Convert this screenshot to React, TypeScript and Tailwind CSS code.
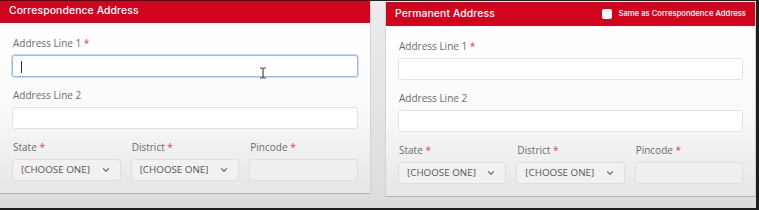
import { ChevronDown } from 'lucide-react';

const labelCls = 'h-[14px] pl-[1px] text-[10px] leading-[14px] text-[#6b6b6b]';

function Label({ text, required }: { text: string; required?: boolean }) {
  return (
    <div className={labelCls} style={{ fontFamily: '"Open Sans", sans-serif' }}>
      {text}
      {required && <span className="text-[#d6454f]"> *</span>}
    </div>
  );
}

function SelectBox() {
  return (
    <div className="flex h-[22px] items-center justify-between rounded-[3px] border border-[#dedede] bg-[#f1f1f1] pl-[8px] pr-[9px]">
      <span className="text-[9.8px] text-[#555]" style={{ fontFamily: '"Open Sans", sans-serif' }}>
        [CHOOSE ONE]
      </span>
      <ChevronDown size={10} strokeWidth={3} className="text-[#777]" />
    </div>
  );
}

function AddressPanel({
  title,
  focused,
  sameAs,
  className,
}: {
  title: string;
  focused?: boolean;
  sameAs?: boolean;
  className: string;
}) {
  return (
    <div className={`flex w-[371px] flex-col border border-t-0 border-[#d6d0d1] border-b-[#c7adb3] ${className}`}>
      <div className="flex h-[24px] items-center justify-between bg-[#d0041f] pl-[9px] pr-[9px]">
        <span className="text-[10.4px] font-medium tracking-[0.1px] text-white" style={{ fontFamily: 'Inter, sans-serif' }}>
          {title}
        </span>
        {sameAs && (
          <label className="flex items-center gap-[6px]">
            <span className="h-[10px] w-[10px] rounded-[2px] bg-white" />
            <span className="text-[7.7px] font-medium text-white" style={{ fontFamily: 'Inter, sans-serif' }}>
              Same as Correspondence Address
            </span>
          </label>
        )}
      </div>
      <div className="flex flex-col bg-gradient-to-b from-white via-[#fafafa] to-[#e6e6e6] px-[12px] pt-[13px] pb-[12px]">
        <Label text="Address Line 1" required />
        <div className="relative mt-[5px]">
          <div
            className={`relative h-[22px] rounded-[3px] border bg-white ${
              focused ? 'border-[#9fbbe3] shadow-[0_0_0_1px_#c9daf2]' : 'border-[#e2e2e2]'
            }`}
          >
            {focused && <span className="absolute left-[8px] top-[5px] h-[12px] w-[1px] bg-[#333]" />}
          </div>
          {focused && (
            <svg className="absolute left-[247px] top-[12px]" width="8" height="12" viewBox="0 0 8 12">
              <path d="M1 1h2.5M4.5 1H7M4 1v10M1 11h2.5M4.5 11H7" stroke="#444" strokeWidth="1.2" fill="none" />
            </svg>
          )}
        </div>
        <div className="mt-[11px]">
          <Label text="Address Line 2" />
        </div>
        <div className="mt-[5px] h-[22px] rounded-[3px] border border-[#e2e2e2] bg-white" />
        <div className="mt-[11px] grid grid-cols-3 gap-x-[10px]">
          <Label text="State" required />
          <Label text="District" required />
          <Label text="Pincode" required />
        </div>
        <div className="mt-[5px] grid grid-cols-3 gap-x-[10px]">
          <SelectBox />
          <SelectBox />
          <div className="h-[22px] rounded-[3px] border border-[#dedede] bg-[#efefef]" />
        </div>
      </div>
    </div>
  );
}

export default function App() {
  return (
    <div className="h-[210px] w-[759px] overflow-hidden border-t border-r-[3px] border-b-[2px] border-[#1e1e1e] bg-gradient-to-b from-[#ececec] to-[#dcdcdc]">
      <div className="flex items-start gap-[14px]">
        <AddressPanel title="Correspondence Address" focused className="-mt-[2px] border-l-0" />
        <AddressPanel title="Permanent Address" sameAs className="mt-[1px]" />
      </div>
    </div>
  );
}
